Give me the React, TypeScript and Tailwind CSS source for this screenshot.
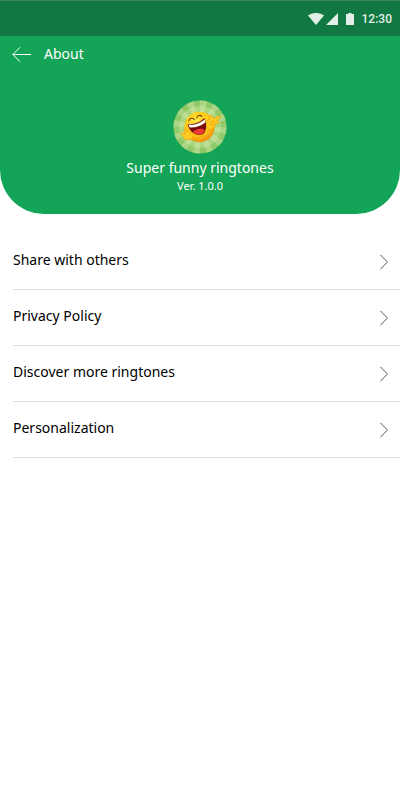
import { useId } from "react";

const menuItems = [
  { label: "Share with others", href: "#share" },
  { label: "Privacy Policy", href: "#privacy" },
  { label: "Discover more ringtones", href: "#discover" },
  { label: "Personalization", href: "#personalization" },
];

function StatusBar() {
  return (
    <div className="flex h-9 items-center justify-end border-t border-[#3f8560] bg-[#117843] pr-2 text-[#e2efe8]">
      <svg className="h-3 w-4" viewBox="0 0 16 12" fill="currentColor" aria-hidden="true">
        <path d="M0 2.6C4.6-.9 11.4-.9 16 2.6L8 12Z" />
      </svg>
      <svg className="ml-0.5 h-3 w-3" viewBox="0 0 12 12" fill="currentColor" aria-hidden="true">
        <path d="M12 0V12H0Z" />
      </svg>
      <svg className="ml-2 h-3 w-2" viewBox="0 0 8 12" fill="currentColor" aria-hidden="true">
        <path d="M2.4 0h3.2v1H8v11H0V1h2.4Z" />
      </svg>
      <span className="ml-2 font-['Roboto',sans-serif] text-xs font-medium">12:30</span>
    </div>
  );
}

function AppLogo() {
  const id = useId();
  const rays = Array.from({ length: 12 }, (_, i) => i * 30);

  return (
    <svg className="size-[54px]" viewBox="0 0 54 54" role="img" aria-label="Super funny ringtones logo">
      <defs>
        <clipPath id={`${id}clip`}>
          <circle cx="27" cy="27" r="26.5" />
        </clipPath>
        <radialGradient id={`${id}face`} cx="0.42" cy="0.35" r="0.65">
          <stop offset="0" stopColor="#ffec45" />
          <stop offset="0.6" stopColor="#fec91c" />
          <stop offset="1" stopColor="#f0920c" />
        </radialGradient>
      </defs>
      <g clipPath={`url(#${id}clip)`}>
        <rect width="54" height="54" fill="#90c968" />
        {rays.map((angle) => (
          <path key={angle} d="M27 27 L23 -3 L31 -3Z" fill="#acd586" transform={`rotate(${angle + 8} 27 27)`} />
        ))}
        <circle cx="27" cy="27" r="21" fill="#b5dc8c" opacity="0.7" />
        {rays.map((angle) => (
          <path key={angle} d="M27 27 L24.2 6 L29.8 6Z" fill="#c9e5a2" opacity="0.5" transform={`rotate(${angle + 8} 27 27)`} />
        ))}
      </g>
      <circle cx="26.5" cy="27" r="15.2" fill={`url(#${id}face)`} />
      <path d="M14.5 24C20 25 27 22.500 31.500 18C34.500 26 33.500 34.500 27 35C20.500 35.400 16 30 14.500 24Z" fill="#780c08" />
      <path d="M15.200 24.600C21 25.600 27.500 23.200 31.600 19.200L32.500 22.200C27.500 26.500 21.500 28 16.800 27.500Z" fill="#fffdf0" />
      <path d="M20 32C22 29 28 27.500 31.700 30C30.600 33 29 34.400 27 34.700C24.200 35 22 34 20 32Z" fill="#f03c35" />
      <path d="M15.800 21C16.500 17.800 19.500 17.500 21.300 19.300M23.800 17.800C24.500 15 27 14.800 28.800 16.500" fill="none" stroke="#7a3d06" strokeWidth="1.1" strokeLinecap="round" />
      <g fill="#ffcb20" stroke="#e98e0c" strokeWidth="0.5" strokeLinejoin="round">
        <path d="M33.500 24.500C33.500 21 35 19 37.500 18.500L36.500 16C36.500 14.500 38.500 14.500 39 16L40.500 18.500L45.500 16C47.300 15.500 48 17.500 46.500 18.500L43.500 20.500L45.500 21C47 22 46 24 44 23.500L42 24C42.500 27 40 29.500 37 29.500C35 29.500 33.500 27.500 33.500 24.500Z" />
        <path d="M11 31C10 29.500 11.500 28.500 12.500 30L14 32.500L15 30C16 28.500 17.500 29.500 17 31.500L17.500 33.500L20 33C21.500 33.500 21.500 35 20 35.800C19 39 16 40.500 13 39.500C11 38.500 10 37 9.500 35.500L7.500 34C7 32.500 8.500 32 9.500 33L12 34.500Z" />
      </g>
      <path d="M37 22L41 21.500M37 24.500L41 24" stroke="#e98e0c" strokeWidth="0.7" strokeLinecap="round" />
    </svg>
  );
}

function Header() {
  return (
    <header className="rounded-b-[44px] bg-[#14a457] pb-5 text-white">
      <div className="flex h-9 items-center gap-3 px-3">
        <button type="button" aria-label="Back" className="cursor-pointer">
          <svg className="h-4 w-5" viewBox="0 0 20 16" fill="none" stroke="currentColor" aria-hidden="true">
            <path d="M19 8.5H.8M8 1.3.8 8.5 8 15.7" />
          </svg>
        </button>
        <h1 className="text-sm leading-5">About</h1>
      </div>
      <div className="flex flex-col items-center pt-7">
        <AppLogo />
        <p className="mt-1 text-sm leading-5">Super funny ringtones</p>
        <p className="text-[11px] leading-4">Ver. 1.0.0</p>
      </div>
    </header>
  );
}

export default function App() {
  return (
    <div className="min-h-screen bg-white font-['Noto_Sans','Open_Sans',sans-serif] text-black">
      <StatusBar />
      <Header />
      <nav aria-label="About" className="pt-5 pl-[13px]">
        {menuItems.map((item) => (
          <a
            key={item.href}
            href={item.href}
            className="flex h-14 items-center justify-between border-b border-[#dcdcdc] pr-3"
          >
            <span className="pb-1 text-sm leading-5">{item.label}</span>
            <svg className="h-4 w-2" viewBox="0 0 8 16" fill="none" stroke="#555" aria-hidden="true">
              <path d="M.4.8 7.4 8 .4 15.2" />
            </svg>
          </a>
        ))}
      </nav>
    </div>
  );
}
